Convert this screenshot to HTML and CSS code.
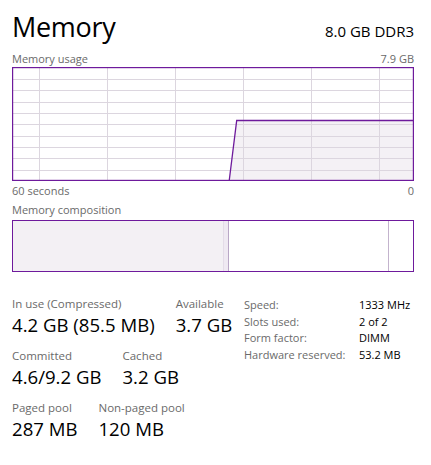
FILE: index.html
```html
<!DOCTYPE html>
<html>
<head>
<meta charset="utf-8">
<link rel="stylesheet" href="styles.css">
</head>
<body>
<div class="page">
  <div class="header">
    <div class="title">Memory</div>
    <div class="subtitle">8.0 GB DDR3</div>
  </div>
  <div class="chart-labels top">
    <span>Memory usage</span>
    <span>7.9 GB</span>
  </div>
  <svg class="chart" width="402" height="114" viewBox="0 0 402 114">
    <polygon points="217.3,113 224.7,53.3 401,53.3 401,113" fill="#f4f1f5"/>
    <g stroke="#dcd6df" stroke-width="1">
      <line x1="27.5" y1="0" x2="27.5" y2="114"/>
      <line x1="95.5" y1="0" x2="95.5" y2="114"/>
      <line x1="163.5" y1="0" x2="163.5" y2="114"/>
      <line x1="231.5" y1="0" x2="231.5" y2="114"/>
      <line x1="299.5" y1="0" x2="299.5" y2="114"/>
      <line x1="367.5" y1="0" x2="367.5" y2="114"/>
      <line x1="0" y1="12.5" x2="402" y2="12.5"/>
      <line x1="0" y1="23.5" x2="402" y2="23.5"/>
      <line x1="0" y1="35.5" x2="402" y2="35.5"/>
      <line x1="0" y1="46.5" x2="402" y2="46.5"/>
      <line x1="0" y1="57.5" x2="402" y2="57.5"/>
      <line x1="0" y1="69.5" x2="402" y2="69.5"/>
      <line x1="0" y1="80.5" x2="402" y2="80.5"/>
      <line x1="0" y1="91.5" x2="402" y2="91.5"/>
      <line x1="0" y1="103.5" x2="402" y2="103.5"/>
    </g>
    <polyline points="217.3,113 224.7,53.5 401,53.5" fill="none" stroke="#6e1a9c" stroke-width="1.3"/>
    <rect x="0.5" y="0.5" width="401" height="113" fill="none" stroke="#6e1a9c" stroke-width="1.4"/>
  </svg>
  <div class="chart-labels bottom">
    <span>60 seconds</span>
    <span>0</span>
  </div>
  <div class="chart-labels comp">
    <span>Memory composition</span>
  </div>
  <div class="composition">
    <div class="seg inuse"></div>
    <div class="seg modified"></div>
    <div class="seg standby"></div>
    <div class="seg free"></div>
  </div>
  <div class="stats">
    <div class="left">
      <div class="row">
        <div class="stat"><div class="label">In use (Compressed)</div><div class="value">4.2 GB (85.5 MB)</div></div>
        <div class="stat"><div class="label">Available</div><div class="value">3.7 GB</div></div>
      </div>
      <div class="row">
        <div class="stat"><div class="label">Committed</div><div class="value">4.6/9.2 GB</div></div>
        <div class="stat"><div class="label">Cached</div><div class="value">3.2 GB</div></div>
      </div>
      <div class="row">
        <div class="stat"><div class="label">Paged pool</div><div class="value">287 MB</div></div>
        <div class="stat"><div class="label">Non-paged pool</div><div class="value">120 MB</div></div>
      </div>
    </div>
    <div class="right">
      <div class="k">Speed:</div><div class="v">1333 MHz</div>
      <div class="k">Slots used:</div><div class="v">2 of 2</div>
      <div class="k">Form factor:</div><div class="v">DIMM</div>
      <div class="k">Hardware reserved:</div><div class="v">53.2 MB</div>
    </div>
  </div>
</div>
</body>
</html>
```

FILE: styles.css
```css
html, body {
  margin: 0;
  padding: 0;
  background: #ffffff;
}

body {
  font-family: "Open Sans", "Noto Sans", sans-serif;
  color: #000000;
}

.page {
  width: 402px;
  margin-left: 12px;
  padding-top: 9px;
}

.header {
  display: flex;
  justify-content: space-between;
  align-items: baseline;
  height: 42px;
}

.title {
  font-size: 27px;
  line-height: 36px;
  font-weight: 400;
  letter-spacing: -0.3px;
}

.subtitle {
  font-size: 15px;
  line-height: 20px;
}

.chart-labels {
  display: flex;
  justify-content: space-between;
  font-size: 11px;
  line-height: 15px;
  color: #6a6a6a;
}

.chart-labels.top {
  height: 16px;
}

.chart {
  display: block;
}

.chart-labels.bottom {
  margin-top: 2px;
  height: 19px;
}

.chart-labels.comp {
  height: 18px;
}

.composition {
  display: flex;
  height: 50px;
  border: 1.4px solid #6e1a9c;
}

.seg {
  height: 100%;
}

.seg.inuse {
  width: 210px;
  background: #f3f0f4;
  border-right: 1px solid #e4dce8;
}

.seg.modified {
  width: 4px;
  background: #efe9f2;
  border-right: 1px solid #b9a7c6;
}

.seg.standby {
  width: 159px;
  background: #ffffff;
  border-right: 1px solid #c3b3cd;
}

.seg.free {
  flex: 1;
  background: #ffffff;
}

.stats {
  display: flex;
  margin-top: 24px;
}

.left {
  width: 232px;
}

.row {
  display: flex;
  gap: 21px;
  margin-bottom: 11px;
}

.label {
  font-size: 11.5px;
  line-height: 16px;
  color: #6a6a6a;
}

.value {
  font-size: 18.6px;
  line-height: 25px;
  color: #000000;
}

.right {
  display: grid;
  grid-template-columns: 115px auto;
  grid-auto-rows: 16.7px;
  font-size: 11px;
  line-height: 16px;
  margin-left: 0;
  margin-top: 1px;
  align-content: start;
}

.k {
  color: #6a6a6a;
}

.v {
  color: #000000;
}
```
